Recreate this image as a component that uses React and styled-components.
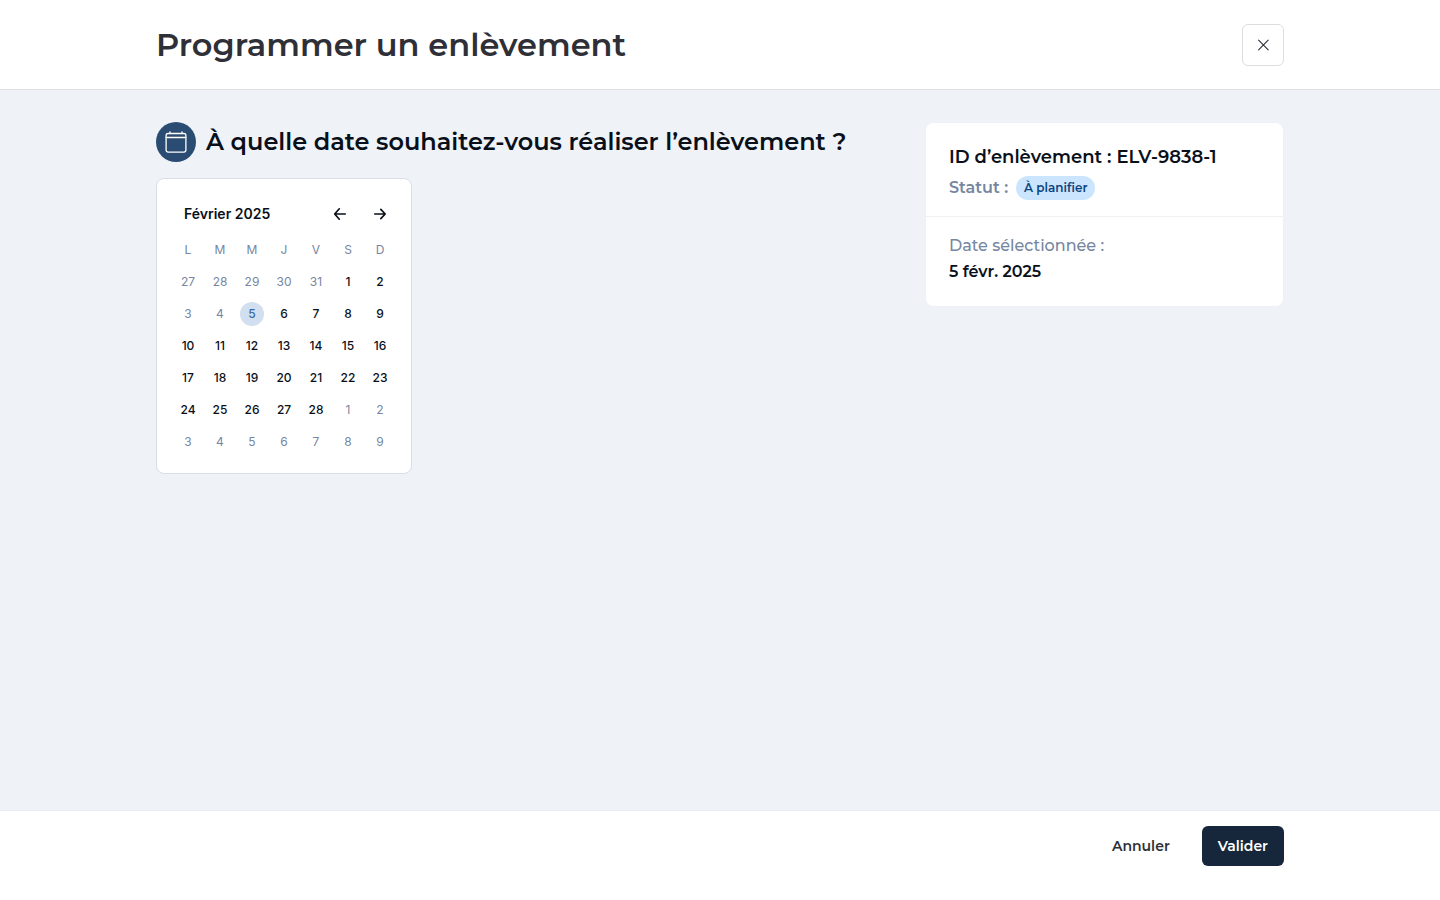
import React, { useState } from "react";
import styled, { createGlobalStyle } from "styled-components";

const GlobalStyle = createGlobalStyle`
  *, *::before, *::after { box-sizing: border-box; }
  body {
    margin: 0;
    background: #fff;
    color: #0a101a;
    font-family: Montserrat, Inter, "Liberation Sans", sans-serif;
    -webkit-font-smoothing: antialiased;
  }
  h1, h2, h3, p { margin: 0; }
  button { font-family: inherit; cursor: pointer; }
`;

const Page = styled.div`
  min-height: 100vh;
  display: flex;
  flex-direction: column;
`;

const Container = styled.div`
  width: 100%;
  max-width: 1176px;
  margin: 0 auto;
  padding: 0 24px;
  display: flex;
  justify-content: ${(p) => p.$justify || "space-between"};
  align-items: ${(p) => p.$align || "center"};
  gap: 16px;
`;

const Header = styled.header`
  border-bottom: 1px solid #dfe1e4;
  padding: 24px 0 23px;
`;

const Title = styled.h1`
  color: #2f3037;
  font-size: 32px;
  line-height: 40px;
  font-weight: 650;
`;

const CloseButton = styled.button`
  width: 42px;
  height: 42px;
  padding: 0;
  display: grid;
  place-items: center;
  background: #fff;
  border: 1px solid #dcdde0;
  border-radius: 6px;
  color: #2f3037;
`;

const Main = styled.main`
  flex: 1;
  background: #eff3f8;
  padding: 32px 0;
`;

const DateSection = styled.section`
  display: flex;
  flex-direction: column;
  align-items: flex-start;
  gap: 16px;
`;

const Question = styled.div`
  display: flex;
  align-items: center;
  gap: 10px;
`;

const IconDisc = styled.span`
  flex: none;
  width: 40px;
  height: 40px;
  display: grid;
  place-items: center;
  border-radius: 50%;
  background: #2a4c72;
  color: #fff;
`;

const QuestionTitle = styled.h2`
  font-size: 24px;
  line-height: 40px;
  font-weight: 650;
`;

const CalendarCard = styled.div`
  width: 256px;
  padding: 15px;
  background: #fff;
  border: 1px solid #d9dfea;
  border-radius: 8px;
  font-family: Inter, "Liberation Sans", sans-serif;
`;

const CalendarHeader = styled.div`
  height: 40px;
  padding-left: 12px;
  display: flex;
  align-items: center;
`;

const MonthTitle = styled.h3`
  flex: 1;
  font-size: 14px;
  line-height: 20px;
  font-weight: 600;
`;

const MonthButton = styled.button`
  width: 32px;
  height: 32px;
  margin-left: 8px;
  padding: 0;
  display: grid;
  place-items: center;
  border: 0;
  background: none;
  color: #0a101a;
`;

const Days = styled.table`
  width: 100%;
  table-layout: fixed;
  border-collapse: collapse;
  font-size: 12px;
  line-height: 24px;

  th, td { height: 32px; padding: 0; text-align: center; }
  th { color: #7686a0; font-weight: 400; }
`;

const DayButton = styled.button`
  width: 24px;
  height: 24px;
  padding: 0;
  display: block;
  margin: 0 auto;
  border: 0;
  border-radius: 50%;
  font-size: 12px;
  line-height: 24px;
  font-weight: ${(p) => (p.$muted ? 400 : 500)};
  color: ${(p) => (p.$selected ? "#396ba7" : p.$muted ? "#7686a0" : "#0a101a")};
  background: ${(p) => (p.$selected ? "#d1dff0" : "transparent")};
`;

const Summary = styled.aside`
  flex: none;
  width: 359px;
  background: #fff;
  border: 1px solid #edf1f6;
  border-radius: 8px;
`;

const SummaryBlock = styled.div`
  padding: ${(p) => (p.$divided ? "20px 23px 16px" : "16px 23px 21px")};
  border-bottom: ${(p) => (p.$divided ? "1px solid #eff1f5" : "0")};
`;

const SummaryTitle = styled.h2`
  font-size: 18px;
  line-height: 28px;
  font-weight: 650;
`;

const StatusRow = styled.p`
  margin-top: 5px;
  display: flex;
  align-items: center;
  gap: 8px;
  color: #7686a0;
  font-size: 16px;
  line-height: 24px;
  font-weight: 600;
`;

const Badge = styled.span`
  padding: 0 8px;
  border-radius: 12px;
  background: #cce5ff;
  color: #0a4480;
  font-size: 12px;
  line-height: 24px;
  font-weight: 600;
`;

const SummaryText = styled.p`
  font-size: 16px;
  line-height: 26px;
  font-weight: ${(p) => (p.$strong ? 600 : 500)};
  color: ${(p) => (p.$strong ? "#0a101a" : "#7686a0")};
`;

const Footer = styled.footer`
  min-height: 90px;
  padding-top: 15px;
  border-top: 1px solid #e8ebef;
`;

const Action = styled.button`
  height: 40px;
  padding: 0 16px;
  border: 0;
  border-radius: 6px;
  font-size: 14px;
  line-height: 20px;
  font-weight: 600;
  color: ${(p) => (p.$primary ? "#fff" : "#2f3037")};
  background: ${(p) => (p.$primary ? "#16263b" : "transparent")};
`;

const weekdays = ["L", "M", "M", "J", "V", "S", "D"];

/* Six weeks starting on Monday 27 January 2025. */
const weeks = Array.from({ length: 6 }, (_, week) =>
  Array.from({ length: 7 }, (_, day) => new Date(2025, 0, 27 + week * 7 + day))
);

/* Other months and the two closed days, 3 and 4 February, cannot be chosen. */
const isMuted = (date) => date.getMonth() !== 1 || [3, 4].includes(date.getDate());

function CloseIcon() {
  return (
    <svg width="12" height="12" viewBox="0 0 12 12" fill="none" stroke="currentColor" strokeWidth="1.1" strokeLinecap="round" aria-hidden="true">
      <path d="M1.6 1.2 11.2 10.8M11.2 1.2 1.6 10.8" />
    </svg>
  );
}

function CalendarIcon() {
  return (
    <svg width="24" height="24" viewBox="0 0 24 24" fill="none" stroke="currentColor" strokeWidth="1.3" strokeLinecap="round" strokeLinejoin="round" aria-hidden="true">
      <rect x="2.1" y="3.5" width="19.8" height="18.6" rx="2" />
      <path d="M2.1 7.5h19.8M6 1.8v1.7M18 1.8v1.7" />
    </svg>
  );
}

function ArrowIcon({ back }) {
  return (
    <svg width="14" height="14" viewBox="0 0 14 14" fill="none" stroke="currentColor" strokeWidth="1.7" strokeLinecap="round" strokeLinejoin="round" aria-hidden="true">
      <path d={back ? "M12.2 7H1.9M6.3 1.8 1.7 7l4.6 5.2" : "M1.8 7h10.2M7.8 2.4 12.2 7l-4.4 4.6"} />
    </svg>
  );
}

export default function App() {
  const [selected, setSelected] = useState(new Date(2025, 1, 5).getTime());
  const selectedLabel = new Date(selected).getDate() + " févr. 2025";

  return (
    <Page>
      <GlobalStyle />
      <Header>
        <Container>
          <Title>Programmer un enlèvement</Title>
          <CloseButton type="button" aria-label="Fermer">
            <CloseIcon />
          </CloseButton>
        </Container>
      </Header>

      <Main>
        <Container $align="flex-start">
          <DateSection>
            <Question>
              <IconDisc>
                <CalendarIcon />
              </IconDisc>
              <QuestionTitle>À quelle date souhaitez-vous réaliser l’enlèvement ?</QuestionTitle>
            </Question>
            <CalendarCard>
              <CalendarHeader>
                <MonthTitle>Février 2025</MonthTitle>
                <MonthButton type="button" aria-label="Mois précédent">
                  <ArrowIcon back />
                </MonthButton>
                <MonthButton type="button" aria-label="Mois suivant">
                  <ArrowIcon />
                </MonthButton>
              </CalendarHeader>
              <Days>
                <thead>
                  <tr>
                    {weekdays.map((name, i) => (
                      <th key={i} scope="col">{name}</th>
                    ))}
                  </tr>
                </thead>
                <tbody>
                  {weeks.map((week, i) => (
                    <tr key={i}>
                      {week.map((date) => (
                        <td key={date.getTime()}>
                          <DayButton
                            type="button"
                            $muted={isMuted(date)}
                            $selected={date.getTime() === selected}
                            aria-pressed={date.getTime() === selected}
                            onClick={() => !isMuted(date) && setSelected(date.getTime())}
                          >
                            {date.getDate()}
                          </DayButton>
                        </td>
                      ))}
                    </tr>
                  ))}
                </tbody>
              </Days>
            </CalendarCard>
          </DateSection>

          <Summary>
            <SummaryBlock $divided>
              <SummaryTitle>ID d’enlèvement : ELV-9838-1</SummaryTitle>
              <StatusRow>
                Statut : <Badge>À planifier</Badge>
              </StatusRow>
            </SummaryBlock>
            <SummaryBlock>
              <SummaryText>Date sélectionnée :</SummaryText>
              <SummaryText $strong>{selectedLabel}</SummaryText>
            </SummaryBlock>
          </Summary>
        </Container>
      </Main>

      <Footer>
        <Container $justify="flex-end">
          <Action type="button">Annuler</Action>
          <Action type="button" $primary>Valider</Action>
        </Container>
      </Footer>
    </Page>
  );
}
